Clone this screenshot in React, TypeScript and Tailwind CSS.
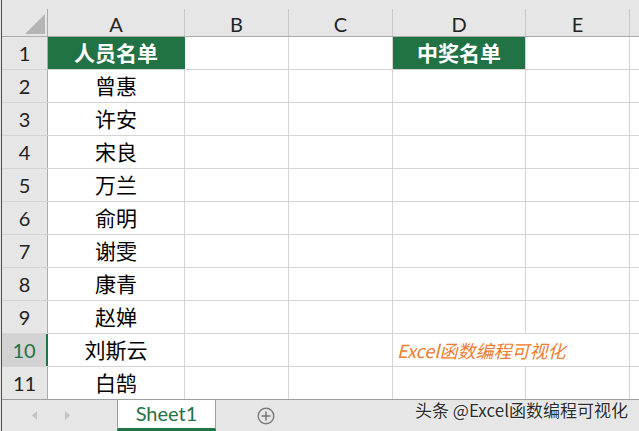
import React from "react";

const names = ["曾惠", "许安", "宋良", "万兰", "俞明", "谢雯", "康青", "赵婵", "刘斯云", "白鹄"];

const FONT = { fontFamily: 'Lato, "Noto Sans CJK SC", sans-serif' };

function Corner() {
  return (
    <div className="w-[46px] h-[27px] border-r border-[#ababab] flex items-end justify-end pr-[2px] pb-[2px]">
      <svg width="20" height="20" viewBox="0 0 20 20">
        <polygon points="20,0 20,20 0,20" fill="#b4b4b4" />
      </svg>
    </div>
  );
}

function ColHead({ label, w }: { label: string; w: string }) {
  return (
    <div className={`${w} h-[27px] border-r border-[#c8c8c8] flex items-center justify-center pt-[3px] text-[20px] text-[#222]`}>
      {label}
    </div>
  );
}

function Row({ n, a, d, hl, last }: { n: number; a?: React.ReactNode; d?: React.ReactNode; hl?: boolean; last?: boolean }) {
  const header = n === 1;
  return (
    <div className={`flex ${last ? "flex-1" : "h-[33px] border-b border-[#d4d4d4]"}`}>
      <div
        className={
          hl
            ? "w-[46px] bg-[#d2d2d2] border-r-2 border-[#217346] flex items-center justify-center text-[20px] text-[#217346]"
            : "w-[46px] bg-[#e6e6e6] border-r border-[#ababab] flex items-center justify-center text-[20px] text-[#222]"
        }
      >
        {n}
      </div>
      <div
        className={
          header
            ? "w-[137px] bg-[#217346] border-r border-[#217346] flex items-center justify-center text-[21px] font-bold text-white"
            : "w-[137px] border-r border-[#d4d4d4] flex items-center justify-center text-[21px] text-black"
        }
        style={{ fontFamily: '"Noto Sans CJK SC", sans-serif' }}
      >
        {a}
      </div>
      <div className="w-[104px] border-r border-[#d4d4d4]" />
      <div className="w-[104px] border-r border-[#d4d4d4]" />
      {header ? (
        <div
          className="w-[133px] bg-[#217346] border-r border-[#d4d4d4] flex items-center justify-center text-[21px] font-bold text-white"
          style={{ fontFamily: '"Noto Sans CJK SC", sans-serif' }}
        >
          中奖名单
        </div>
      ) : d ? (
        <div className="w-[133px] relative flex items-center pl-[4px] whitespace-nowrap overflow-visible z-10">
          {d}
        </div>
      ) : (
        <div className="w-[133px] border-r border-[#d4d4d4]" />
      )}
      <div className="w-[104px] border-r border-[#d4d4d4]" />
      <div className="flex-1" />
    </div>
  );
}

export default function App() {
  return (
    <div className="w-[639px] h-[431px] relative overflow-hidden bg-white flex" style={FONT}>
      <div className="w-px bg-[#e6e6e6]" />
      <div className="w-px bg-[#3b5a45]" />
      <div className="flex-1 flex flex-col">
        <div className="h-[37px] bg-[#e6e6e6] border-b border-[#ababab] flex items-end">
          <Corner />
          <ColHead label="A" w="w-[137px]" />
          <ColHead label="B" w="w-[104px]" />
          <ColHead label="C" w="w-[104px]" />
          <ColHead label="D" w="w-[133px]" />
          <ColHead label="E" w="w-[104px]" />
          <div className="flex-1" />
        </div>
        <Row n={1} a="人员名单" />
        {names.map((nm, i) => (
          <Row
            key={i}
            n={i + 2}
            a={nm}
            hl={i + 2 === 10}
            last={i + 2 === 11}
            d={
              i + 2 === 10 ? (
                <span
                  className="italic text-[18px] text-[#ed7d31]"
                  style={{ fontFamily: '"Noto Sans CJK SC", sans-serif' }}
                >
                  Excel函数编程可视化
                </span>
              ) : undefined
            }
          />
        ))}
        <div className="h-[32px] bg-[#e6e6e6] border-t border-[#9e9e9e] flex">
          <div className="w-[115px] flex items-center">
            <svg className="ml-[30px]" width="6" height="9" viewBox="0 0 6 9">
              <polygon points="5,0 5,9 0,4.5" fill="#c4c4c4" />
            </svg>
            <svg className="ml-[27px]" width="6" height="9" viewBox="0 0 6 9">
              <polygon points="0,0 0,9 5,4.5" fill="#c4c4c4" />
            </svg>
          </div>
          <div className="w-[99px] bg-white border-x border-[#9e9e9e] border-b-[3px] border-b-[#217346] flex items-center justify-center text-[20px] text-[#217346] pb-[2px]">
            Sheet1
          </div>
          <div className="flex items-center ml-[41px]">
            <svg width="18" height="18" viewBox="0 0 18 18">
              <circle cx="9" cy="9" r="7.8" fill="none" stroke="#7a7a7a" strokeWidth="1.4" />
              <line x1="9" y1="4.5" x2="9" y2="13.5" stroke="#7a7a7a" strokeWidth="1.6" />
              <line x1="4.5" y1="9" x2="13.5" y2="9" stroke="#7a7a7a" strokeWidth="1.6" />
            </svg>
          </div>
        </div>
      </div>
      <div
        className="absolute right-[11px] top-[400px] text-[17px] leading-[20px] text-[#2a2a2a] [text-shadow:0_0_2px_#fff,0_0_1px_#fff]"
        style={{ fontFamily: '"Noto Sans CJK SC", sans-serif' }}
      >
        头条 @Excel函数编程可视化
      </div>
    </div>
  );
}
